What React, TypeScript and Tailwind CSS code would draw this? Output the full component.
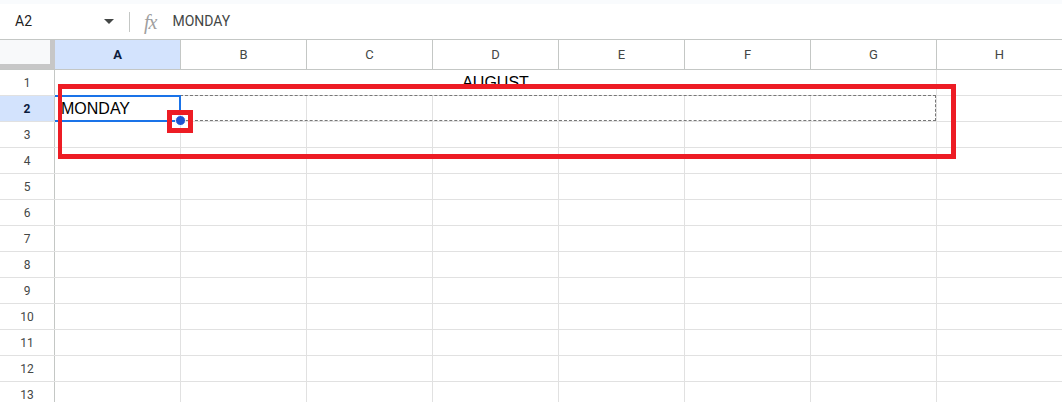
const cols = ["A", "B", "C", "D", "E", "F", "G", "H"];
const rows = [1, 2, 3, 4, 5, 6, 7, 8, 9, 10, 11, 12, 13, 14];

function RowHeader({ n }: { n: number }) {
  const active = n === 2;
  return (
    <div
      className={`w-[55px] shrink-0 h-full flex items-center justify-center border-r border-[#c4c7c5] text-[12px] font-['Roboto',sans-serif] ${
        active ? "bg-[#d3e3fd] font-bold text-[#0b1b3d]" : "bg-white text-[#444746]"
      }`}
    >
      {n}
    </div>
  );
}

function App() {
  return (
    <div className="w-[1062px] h-[402px] overflow-hidden bg-white flex flex-col font-['Liberation_Sans',Arial,sans-serif]">
      <div className="h-[4px] bg-[#f9fbfd] shrink-0" />

      {/* formula bar */}
      <div className="h-[35px] shrink-0 flex items-center bg-white">
        <div className="w-[121px] flex items-center justify-between pl-[15px] pr-[7px]">
          <span className="text-[14px] text-[#1f1f1f] font-['Roboto',sans-serif]">A2</span>
          <svg width="10" height="5" viewBox="0 0 10 5">
            <path d="M0 0h10L5 5z" fill="#444746" />
          </svg>
        </div>
        <div className="w-px h-[20px] bg-[#c4c7c5] ml-[8px]" />
        <span className="ml-[14px] text-[20px] italic text-[#a0a0a0] font-['Liberation_Serif',serif] leading-none tracking-[-1px]">
          fx
        </span>
        <span className="ml-[16px] text-[14px] text-[#444746] font-['Roboto',sans-serif]">MONDAY</span>
      </div>

      {/* grid */}
      <div className="relative flex-1">
        {/* column headers */}
        <div className="flex h-[31px] border-t border-b border-[#c4c7c5]">
          <div className="w-[55px] shrink-0 h-full bg-[#f8f9fa] border-r-[5px] border-b-[5px] border-[#c7c7c7]" />
          {cols.map((c) => (
            <div
              key={c}
              className={`w-[126px] shrink-0 h-full flex items-center justify-center border-r border-[#c4c7c5] text-[13px] font-['Roboto',sans-serif] ${
                c === "A" ? "bg-[#d3e3fd] font-bold text-[#0b1b3d]" : "text-[#444746]"
              }`}
            >
              {c}
            </div>
          ))}
        </div>

        {/* rows */}
        {rows.map((r) => (
          <div key={r} className="flex h-[26px] border-b border-[#e1e1e1]">
            <RowHeader n={r} />
            {r === 1 ? (
              <>
                <div className="w-[882px] shrink-0 h-full border-r border-[#e1e1e1] flex items-end justify-center pb-[4px] text-[16px] text-black leading-none">
                  AUGUST
                </div>
                <div className="w-[126px] shrink-0 h-full border-r border-[#e1e1e1]" />
              </>
            ) : (
              cols.map((c) => (
                <div
                  key={c}
                  className="w-[126px] shrink-0 h-full border-r border-[#e1e1e1] overflow-hidden flex items-end pb-[4px] text-[16px] text-black leading-none"
                >
                  {r === 2 && c === "A" ? <span className="ml-[6px]">MONDAY</span> : null}
                </div>
              ))
            )}
          </div>
        ))}

        {/* copy range (dashed) */}
        <div className="absolute left-[180px] top-[56px] w-[756px] h-[26px] border border-dashed border-[#777]" />
        {/* active cell */}
        <div className="absolute left-[55px] top-[56px] w-[126px] h-[27px] border-2 border-l-0 border-[#1a73e8]" />
        {/* fill handle */}
        <div className="absolute left-[175px] top-[76px] w-[11px] h-[11px] rounded-full bg-[#1f55d2] border border-white" />

        {/* annotations */}
        <div className="absolute left-[58px] top-[45px] w-[898px] h-[75px] border-[5px] border-l-4 border-[#ed1c24]" />
        <div className="absolute left-[167px] top-[71px] w-[26px] h-[23px] border-[5px] border-[#ed1c24]" />
      </div>
    </div>
  );
}

export default App;
